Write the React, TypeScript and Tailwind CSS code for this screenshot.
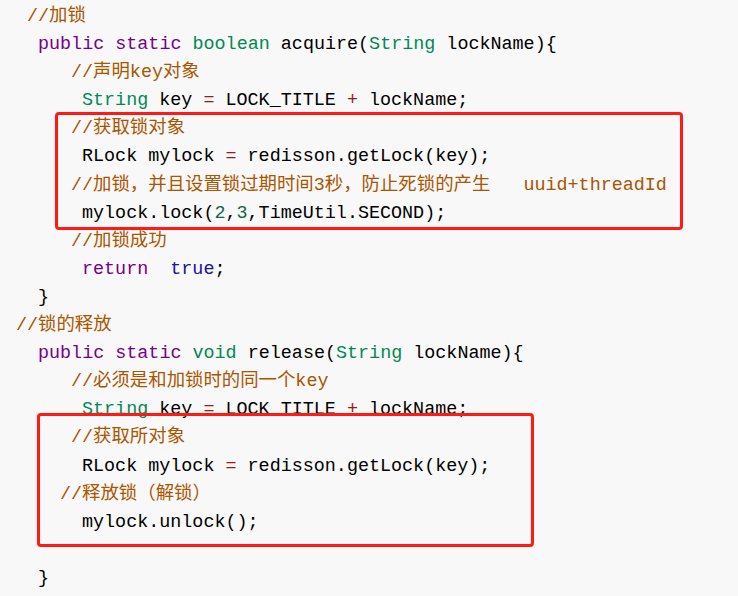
type Tok = [string, string?];

const C = {
  kw: "text-[#770088]",
  type: "text-[#008855]",
  cm: "text-[#aa5500]",
  atom: "text-[#221199]",
  num: "text-[#116644]",
  op: "text-[#981a1a]",
};

const lines: { pl: string; toks: Tok[] }[] = [
  { pl: "pl-[27px]", toks: [["//加锁", C.cm]] },
  { pl: "pl-[38px]", toks: [["public static ", C.kw], ["boolean", C.type], [" acquire("], ["String", C.type], [" lockName){"]] },
  { pl: "pl-[71px]", toks: [["//声明key对象", C.cm]] },
  { pl: "pl-[82px]", toks: [["String", C.type], [" key "], ["=", C.op], [" LOCK_TITLE "], ["+", C.op], [" lockName;"]] },
  { pl: "pl-[71px]", toks: [["//获取锁对象", C.cm]] },
  { pl: "pl-[82px]", toks: [["RLock mylock "], ["=", C.op], [" redisson.getLock(key);"]] },
  { pl: "pl-[71px]", toks: [["//加锁，并且设置锁过期时间3秒，防止死锁的产生   uuid+threadId", C.cm]] },
  { pl: "pl-[82px]", toks: [["mylock.lock("], ["2", C.num], [","], ["3", C.num], [",TimeUtil.SECOND);"]] },
  { pl: "pl-[71px]", toks: [["//加锁成功", C.cm]] },
  { pl: "pl-[82px]", toks: [["return", C.kw], ["  "], ["true", C.atom], [";"]] },
  { pl: "pl-[38px]", toks: [["}"]] },
  { pl: "pl-[16px]", toks: [["//锁的释放", C.cm]] },
  { pl: "pl-[38px]", toks: [["public static ", C.kw], ["void", C.type], [" release("], ["String", C.type], [" lockName){"]] },
  { pl: "pl-[71px]", toks: [["//必须是和加锁时的同一个key", C.cm]] },
  { pl: "pl-[82px]", toks: [["String", C.type], [" key "], ["=", C.op], [" LOCK_TITLE "], ["+", C.op], [" lockName;"]] },
  { pl: "pl-[71px]", toks: [["//获取所对象", C.cm]] },
  { pl: "pl-[82px]", toks: [["RLock mylock "], ["=", C.op], [" redisson.getLock(key);"]] },
  { pl: "pl-[60px]", toks: [["//释放锁（解锁）", C.cm]] },
  { pl: "pl-[82px]", toks: [["mylock.unlock();"]] },
  { pl: "pl-[82px]", toks: [[""]] },
  { pl: "pl-[38px]", toks: [["}"]] },
];

export default function App() {
  return (
    <div className="relative w-[738px] h-[596px] overflow-hidden bg-[#f8f8f8]">
      <div
        className="flex flex-col pt-[3px] text-[18.4px] leading-[28.1px] text-black whitespace-pre"
        style={{ fontFamily: '"Liberation Mono", "Noto Sans CJK SC", monospace' }}
      >
        {lines.map((l, i) => (
          <div key={i} className={`h-[28.1px] ${l.pl}`}>
            {l.toks.map(([t, c], j) => (
              <span key={j} className={c ?? ""}>{t}</span>
            ))}
          </div>
        ))}
      </div>

      {/* annotation boxes */}
      <div className="absolute left-[55px] top-[112px] w-[628px] h-[118px] border-[3.5px] border-[#ff1a14] rounded-[4px]" />
      <div className="absolute left-[37px] top-[413px] w-[497px] h-[134px] border-[3.5px] border-[#ff1a14] rounded-[4px]" />
    </div>
  );
}
